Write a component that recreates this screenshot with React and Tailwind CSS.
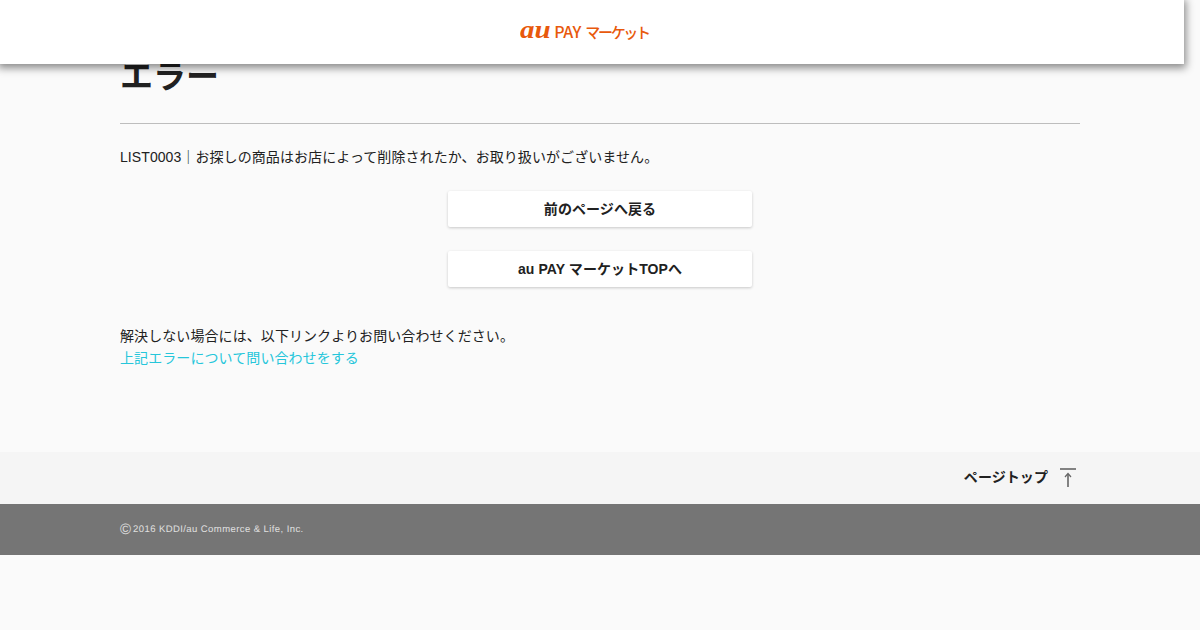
import React from "react";

const fontStack = { fontFamily: '"Liberation Sans", "Noto Sans CJK JP", sans-serif' };

function Logo() {
    return (
        <a className="flex items-baseline mr-[15px] -mt-[5px] text-[#e8590c] leading-none select-none font-['Noto_Sans_CJK_JP']">
            <span className="font-['Liberation_Serif'] italic font-bold text-[25px] w-[30px] mr-[4px] origin-left scale-x-[1.16]">au</span>
            <span className="text-[16px] font-medium w-[28px] tracking-[-0.4px]">PAY</span>
            <span className="text-[15px] font-medium ml-[3px] tracking-[-2.3px]">マーケット</span>
        </a>
    );
}

export default function App() {
    return (
        <div className="min-h-[630px] bg-[#fafafa] text-[#212121] text-[14px] leading-[22px] tracking-[0.08px]" style={fontStack}>
            <header className="absolute top-0 left-0 z-10 w-[1184px] h-16 bg-white flex items-center justify-center shadow-[0_2px_8px_2px_rgba(0,0,0,0.45)]">
                <Logo />
            </header>

            <main className="px-[120px] pt-[57px]">
                <h1 className="text-[33px] leading-[40px] tracking-normal font-bold pb-[26px] border-b border-[#bdbdbd]">エラー</h1>
                <p className="mt-[22px]">LIST0003｜お探しの商品はお店によって削除されたか、お取り扱いがございません。</p>

                <div className="mt-[23px] flex flex-col items-center gap-6">
                    <a className="w-[304px] h-9 bg-white rounded-[2px] flex items-center justify-center font-bold shadow-[0_1px_3px_rgba(0,0,0,0.2)]">前のページへ戻る</a>
                    <a className="w-[304px] h-9 bg-white rounded-[2px] flex items-center justify-center font-bold shadow-[0_1px_3px_rgba(0,0,0,0.2)]">au PAY マーケットTOPへ</a>
                </div>

                <p className="mt-[38px]">解決しない場合には、以下リンクよりお問い合わせください。</p>
                <a className="block text-[#26c6da]">上記エラーについて問い合わせをする</a>
            </main>

            <div className="mt-[83px] h-[52px] bg-[#f5f5f5] flex items-center justify-end pr-[124px]">
                <a className="flex items-center gap-3 font-bold -mt-[2px]">
                    ページトップ
                    <svg width="16" height="20" viewBox="0 0 16 20" fill="none" stroke="#666666" className="mt-[2px]">
                        <path d="M0 1h16" strokeWidth="1.6" />
                        <path d="M8 19V6" strokeWidth="1.6" />
                        <path d="M5 9l3-3.5L11 9" strokeWidth="1.2" />
                    </svg>
                </a>
            </div>

            <footer className="h-[51px] bg-[#757575] flex items-center px-[120px] text-[9.5px] tracking-[0.42px] text-[#e0e0e0] [text-rendering:geometricPrecision]">
                <span className="text-[15px] leading-none mr-[2px] tracking-normal -mt-[1px]">©</span>
                <span>2016 KDDI/au Commerce &amp; Life, Inc.</span>
            </footer>
        </div>
    );
}
